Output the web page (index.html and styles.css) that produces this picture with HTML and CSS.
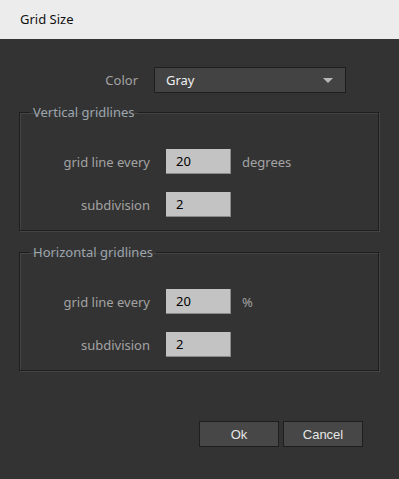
FILE: index.html
```html
<!DOCTYPE html>
<html>
<head>
  <title>Grid Size</title>
  <link rel="stylesheet" href="styles.css">
</head>
<body>

  <div class="titlebar">Grid Size</div>

  <div class="dialog">
    <div class="color-row">
      <label class="color-label">Color</label>
      <div class="select">
        <span>Gray</span>
        <span class="arrow"></span>
      </div>
    </div>

    <fieldset class="group">
      <legend>Vertical gridlines</legend>
      <div class="row">
        <label>grid line every</label>
        <input type="text" value="20">
        <span class="unit">degrees</span>
      </div>
      <div class="row">
        <label>subdivision</label>
        <input type="text" value="2">
      </div>
    </fieldset>

    <fieldset class="group">
      <legend>Horizontal gridlines</legend>
      <div class="row">
        <label>grid line every</label>
        <input type="text" value="20">
        <span class="unit">%</span>
      </div>
      <div class="row">
        <label>subdivision</label>
        <input type="text" value="2">
      </div>
    </fieldset>

    <div id="buttons">
      <button>Ok</button>
      <button>Cancel</button>
    </div>
  </div>

</body>
</html>
```

FILE: styles.css
```css
body {
  margin: 0;
  background: #333333;
  font-family: "Noto Sans", "Open Sans", sans-serif;
  font-size: 12px;
  width: 399px;
  height: 479px;
  overflow: hidden;
}
.titlebar {
  height: 39px;
  line-height: 39px;
  background: #ececec;
  color: #111;
  padding-left: 20px;
  font-size: 13px;
}
.dialog {
  padding: 28px 20px 0 19px;
}
.color-row {
  display: flex;
  align-items: center;
  gap: 16px;
  height: 26px;
}
.color-label {
  width: 119px;
  text-align: right;
  color: #a3a3a3;
  font-size: 13px;
}
.select {
  width: 192px;
  height: 26px;
  box-sizing: border-box;
  background: #434343;
  border: 1px solid #1e1e1e;
  color: #f0f0f0;
  font-size: 13px;
  display: flex;
  align-items: center;
  padding: 0 12px 0 11px;
}
.select span:first-child { flex: 1; }
.arrow {
  width: 0;
  height: 0;
  border-left: 5px solid transparent;
  border-right: 5px solid transparent;
  border-top: 5px solid #b8b8b8;
}
.group {
  margin: 10px 0 0 0;
  padding: 28px 0 13px 0;
  border: 1px solid #1e1e1e;
  box-shadow: 1px 1px 0 #444, inset 1px 1px 0 #444;
  min-width: 0;
}
.group + .group { margin-top: 12px; }
.group legend {
  margin-left: 10px;
  padding: 0 3px;
  color: #9ea6ae;
  font-size: 13px;
  line-height: 18px;
}
.row {
  display: flex;
  align-items: center;
  height: 25px;
}
.row + .row { margin-top: 18px; }
.row label {
  width: 130px;
  text-align: right;
  color: #a3a3a3;
  font-size: 13px;
  margin-right: 16px;
}
.row input {
  width: 65px;
  height: 25px;
  box-sizing: border-box;
  border: none;
  border-right: 1px solid #8a8a8a;
  border-bottom: 1px solid #8a8a8a;
  background: #c3c3c3;
  padding: 0 0 0 10px;
  font-family: "Noto Sans", sans-serif;
  font-size: 13px;
  color: #000;
}
.unit {
  margin-left: 11px;
  color: #a3a3a3;
  font-size: 13px;
}
#buttons {
  margin-top: 50px;
  display: flex;
  justify-content: flex-end;
  gap: 4px;
  padding-right: 16px;
}
#buttons button {
  width: 80px;
  height: 26px;
  background: #474747;
  border: 1px solid #1e1e1e;
  color: #e6e6e6;
  font-family: "Liberation Sans", Arial, sans-serif;
  font-size: 13px;
  padding: 0;
}
```
